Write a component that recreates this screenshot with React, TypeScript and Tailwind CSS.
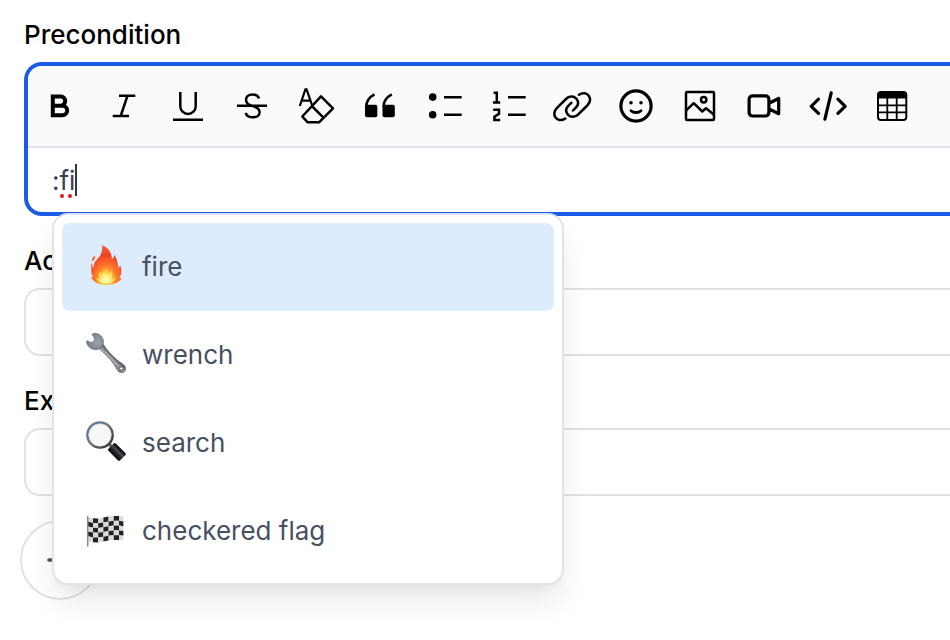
import { useState } from 'react';
import type { ReactNode } from 'react';
import { clsx } from 'clsx';

const tools: { label: string; icon: ReactNode }[] = [
  {
    label: 'Bold',
    icon: (
      <path
        strokeWidth="4"
        strokeLinejoin="miter"
        d="M12.8 10.4h8.4a4.7 4.7 0 0 1 0 9.3h-8.4zM12.8 19.7h9.6a4.7 4.7 0 0 1 0 9.5h-9.6z"
      />
    ),
  },
  { label: 'Italic', icon: <path d="M15 9.7h16.3M8.7 30H25M23.5 9.7L16.7 30" /> },
  { label: 'Underline', icon: <path d="M12.3 6v14.2a7.7 7.7 0 0 0 15.4 0V6M5 33.7h30" /> },
  {
    label: 'Strikethrough',
    icon: (
      <path d="M5 19.8h30M27 12.5C26.2 10 23.6 8.5 20.5 8.5C16.5 8.5 14 10.8 14 13.8C14 17 16 18.7 20 19.8C24.5 21 27.6 22.8 27.6 26.2C27.6 29.4 24.8 31.3 21 31.3C17.2 31.3 14.5 29.6 13.6 26.8" />
    ),
  },
  {
    label: 'Clear formatting',
    icon: (
      <>
        <path strokeWidth="2.2" d="M3.8 20L9.4 3.4h1.2L16 19M5.6 14.7h8.6" />
        <path strokeLinejoin="round" d="M25 10.3l12 12-14 14H11.7l-5.4-5.8zM15.3 19.5l12.4 12.4" />
      </>
    ),
  },
  {
    label: 'Quote',
    icon: (
      <>
        <path d="M14.5 8.4C9.5 11 6.2 15 6.2 21M31.8 8.4C26.8 11 23.5 15 23.5 21" />
        <rect x="5" y="18.7" width="12.3" height="12.5" rx="2" fill="currentColor" stroke="none" />
        <rect x="22.5" y="18.7" width="12.3" height="12.5" rx="2" fill="currentColor" stroke="none" />
      </>
    ),
  },
  {
    label: 'Bulleted list',
    icon: (
      <>
        <circle cx="8.7" cy="11.1" r="3.8" fill="currentColor" stroke="none" />
        <circle cx="8.7" cy="28.7" r="3.8" fill="currentColor" stroke="none" />
        <path d="M20 11.3h17.7M20 28.7h17.7" />
      </>
    ),
  },
  {
    label: 'Numbered list',
    icon: (
      <path d="M5.6 6.7h3.2v9.8M5 16.5h7.2M5.2 23.8h5.8v4l-4.6 2.9v3.2h5.8M20 11.3h17.7M20 28.7h17.7" />
    ),
  },
  {
    label: 'Link',
    icon: (
      <path
        strokeLinecap="round"
        d="M13.3 32.5C9.5 35.2 5 34.3 3.3 31.2C1.5 28 2.3 24.5 5 21.8L14 13C17 10 21.5 9.5 24.2 12.5C27 15.5 26.3 19 23.8 21.6L21 24.5M27 8.8C30.8 6.1 35.3 7 37 10.1C38.8 13.3 38 16.8 35.3 19.5L26.3 28.3C23.3 31.3 18.8 31.8 16.1 28.8C13.3 25.8 14 22.3 16.5 19.7L19.3 16.8"
      />
    ),
  },
  {
    label: 'Emoji',
    icon: (
      <>
        <circle cx="20" cy="20" r="15.1" strokeWidth="3.2" />
        <circle cx="15" cy="16.7" r="1.8" fill="currentColor" stroke="none" />
        <circle cx="25" cy="16.7" r="1.8" fill="currentColor" stroke="none" />
        <path strokeWidth="2.8" strokeLinecap="round" d="M15 24.7c2.6 2.4 7.4 2.4 10 0" />
      </>
    ),
  },
  {
    label: 'Image',
    icon: (
      <>
        <rect x="6" y="5.9" width="28" height="28" rx="1" />
        <circle cx="23.7" cy="13.7" r="2.7" />
        <path strokeLinejoin="round" d="M6 24.7l7.7-7.5 8.6 8.3 3.7-3.2 8 6.4" />
      </>
    ),
  },
  {
    label: 'Video',
    icon: (
      <path
        strokeWidth="3.2"
        strokeLinejoin="round"
        d="M8.5 9.8h13a3.4 3.4 0 0 1 3.4 3.4v13.4a3.4 3.4 0 0 1-3.4 3.4h-13a3.4 3.4 0 0 1-3.4-3.4V13.2a3.4 3.4 0 0 1 3.4-3.4zM25 17.3l9.7-4.8v15.2L25 22.9"
      />
    ),
  },
  {
    label: 'Code',
    icon: (
      <path
        strokeWidth="3.2"
        strokeLinecap="round"
        strokeLinejoin="round"
        d="M10.5 13.2l-7.3 7.1 7.3 7.1M29.9 13.2l7.3 7.1-7.3 7.1M23.2 6.9l-6.3 26.2"
      />
    ),
  },
  {
    label: 'Table',
    icon: (
      <>
        <rect x="6" y="6" width="28.3" height="28" rx="3" strokeWidth="2" />
        <path fill="currentColor" stroke="none" d="M6 8a2 2 0 0 1 2-2h24a2 2 0 0 1 2 2v4.4H6z" />
        <path strokeWidth="1.8" d="M15.3 12v22M24.7 12v22M6 19.3h28M6 26.4h28" />
      </>
    ),
  },
];

const FireIcon = () => (
  <>
    <defs>
      <radialGradient id="flame" cx="0.5" cy="0.88" r="0.85">
        <stop offset="0" stopColor="#ffe95a" />
        <stop offset="0.25" stopColor="#ffab2b" />
        <stop offset="0.48" stopColor="#fb6f29" />
        <stop offset="0.75" stopColor="#f04426" />
        <stop offset="1" stopColor="#f0623a" />
      </radialGradient>
      <radialGradient id="core" cx="0.5" cy="0.75" r="0.7">
        <stop offset="0" stopColor="#fffbd0" />
        <stop offset="0.5" stopColor="#ffe65a" />
        <stop offset="1" stopColor="#ffab2e" />
      </radialGradient>
    </defs>
    <g transform="translate(1 0)">
      <path
        fill="url(#flame)"
        d="M15.2.3c6.2 2.2 9.5 7.2 9.7 13.9 1.5-1 2.4-2.5 2.5-4.2 2.2 2.8 2.5 5.7 3.4 8.6.6 1.8.6 3.3.4 4.9.8-.8 1.6-2 2-3.2 2 4.8 1.5 9.5-1 12.8 1 .2 1.8-.2 2.5-.7-1.3 4.3-7.5 7.5-15 7.5-8 0-14.2-3-15.7-8.4.7.6 1.4.9 2.3.8C4 28.6 3.4 24.7 5 19.9c.3 1.2.8 2 1.7 2.6-.3-3 .6-5 2.8-7.5 1.8-2 3.2-3.2 4.2-5.4 1.3-2.8 1.5-5.6 1.5-9.3z"
      />
      <path
        fill="#f15a2a"
        d="M8.3 10.7c-2.7 1.2-3.8 3-3 5.8C7 14.7 8.2 13.3 8.3 10.7zM5 18c-1.2 1.2-1.4 2.5-.7 4 .8-1.1 1.1-2.5.7-4z"
      />
      <path
        fill="url(#core)"
        d="M20.2 22.6c1 2.4 1.2 4.2.6 6 1.5-.4 2.7-1.5 3.3-3 2.2 3.4 2 6.5.3 8.7 1.7-.3 2.7-1 3.9-2-.5 3.8-3.9 6.6-9.2 6.6-5.2 0-9.2-2.6-9.7-6.4 1 .9 2.2 1.4 3.4 1.3-1.7-2.4-1.4-5.4.2-7.6.5 1.2 1.2 1.8 2.2 2.2.1-2.9 2.9-3 5-5.8z"
      />
    </g>
  </>
);

const WrenchIcon = () => (
  <>
    <defs>
      <linearGradient id="steel" gradientUnits="userSpaceOnUse" x1="17" y1="27" x2="24" y2="20">
        <stop offset="0" stopColor="#5f5e66" />
        <stop offset="0.45" stopColor="#8d8e95" />
        <stop offset="0.7" stopColor="#9b9ca2" />
        <stop offset="1" stopColor="#66656d" />
      </linearGradient>
      <radialGradient id="jaw" gradientUnits="userSpaceOnUse" cx="11" cy="9" r="9">
        <stop offset="0" stopColor="#9ba3aa" />
        <stop offset="1" stopColor="#7d858d" />
      </radialGradient>
    </defs>
    <path
      fill="url(#steel)"
      stroke="#5b5b64"
      strokeWidth="0.8"
      d="M17.4 11.6c3.4 5.6 8.8 11.2 13.6 15.4 3 2.3 5.8 3.6 7.4 5.6 1.7 2.3 1.3 5.3-.6 6.4-2.3 1.3-5.1.6-6.6-2.2C28.2 30 21.5 23 13.2 15.6z"
    />
    <path
      fill="url(#jaw)"
      stroke="#5d666f"
      strokeWidth="0.8"
      strokeLinejoin="round"
      d="M8 .5c5-.4 9.3 3.2 9.4 8.2 0 1.5-.3 2.9-.9 4l-2.6 2.8c-3.3 1.6-7.6 1.3-10.4-1.3-2-1.8-3-3.7-2.8-5.6.2-.8 1.1-1 1.7-.4 1.5 1.5 3.4 1.7 4.9.6 1.6-1.4 1.7-3.4.4-5.2L6.2 2C6 1.2 6.8.6 8 .5z"
    />
    <path stroke="#c4c7cb" strokeWidth="1" strokeLinecap="round" d="M15.5 16.2C21 21 27 27 31 32" />
    <circle cx="35.3" cy="35.5" r="1.8" fill="#f2f3f4" stroke="#55555c" strokeWidth="1" />
  </>
);

const SearchIcon = () => (
  <>
    <defs>
      <linearGradient id="rim" x1="0" y1="0" x2="1" y2="1">
        <stop offset="0" stopColor="#507ca5" />
        <stop offset="0.45" stopColor="#72777b" />
        <stop offset="1" stopColor="#282b2e" />
      </linearGradient>
      <linearGradient id="grip" gradientUnits="userSpaceOnUse" x1="27" y1="34" x2="34" y2="27">
        <stop offset="0.1" stopColor="#101214" />
        <stop offset="0.4" stopColor="#23272a" />
        <stop offset="0.6" stopColor="#4b5156" />
        <stop offset="0.85" stopColor="#15171a" />
      </linearGradient>
    </defs>
    <path stroke="#6a7074" strokeWidth="3.4" d="M22.5 22.4l4.8 4.8" />
    <path
      fill="url(#grip)"
      d="M22.7 27.4l4.9-5c.7-.7 1.5-.7 2.2 0l9.4 9.3c.8.8.8 1.8.1 2.5L34.2 39.3c-.8.7-1.7.7-2.5-.1l-9-9.3c-.8-.8-.8-1.7 0-2.5z"
    />
    <circle cx="14" cy="14" r="12.6" fill="#f7f7f7" stroke="url(#rim)" strokeWidth="2.5" />
    <circle cx="14" cy="14" r="11.2" fill="none" stroke="#d2d4d5" strokeWidth="0.7" />
  </>
);

// x and top edge of each vertical seam of the waving cloth
const seams = [
  [2, 8],
  [7, 9.2],
  [12.2, 9.4],
  [17.4, 8.6],
  [22.6, 7.6],
  [27.8, 7],
  [33, 7],
  [37.4, 7.6],
];
const ROW = 4.8;

const FlagIcon = () => (
  <>
    {seams.slice(0, -1).map(([x1, y1], c) => {
      const [x2, y2] = seams[c + 1];
      return [0, 1, 2, 3, 4].map((r) => (
        <polygon
          key={`${c}-${r}`}
          fill={(r + c) % 2 === 1 ? '#232323' : '#dadada'}
          points={`${x1},${y1 + r * ROW} ${x2},${y2 + r * ROW} ${x2},${y2 + (r + 1) * ROW} ${x1},${y1 + (r + 1) * ROW}`}
        />
      ));
    })}
    <path stroke="#898b8d" strokeWidth="1.5" d="M1.7 7v30.5" />
  </>
);

const suggestions = [
  { name: 'fire', Icon: FireIcon },
  { name: 'wrench', Icon: WrenchIcon },
  { name: 'search', Icon: SearchIcon },
  { name: 'checkered flag', Icon: FlagIcon },
];

function Toolbar() {
  return (
    <div
      role="toolbar"
      aria-label="Formatting"
      className="flex items-center gap-4 rounded-tl-[14px] border-b-2 border-[#e1e2e7] bg-[#f9fafc] px-2 py-4"
    >
      {tools.map(({ label, icon }) => (
        <button key={label} type="button" aria-label={label} className="flex size-12 shrink-0 items-center justify-center">
          <svg viewBox="0 0 40 40" className="size-10" fill="none" stroke="currentColor" strokeWidth="2.5">
            {icon}
          </svg>
        </button>
      ))}
    </div>
  );
}

function EmojiMenu({ onPick }: { onPick: (name: string) => void }) {
  const [active, setActive] = useState(0);

  return (
    <div
      role="listbox"
      aria-label="Emoji suggestions"
      className="absolute top-[65px] left-6 z-10 flex w-[512px] flex-col rounded-2xl border-2 border-[#e2e3e8] border-t-[#d8e3fa] bg-white p-2 shadow-[0_20px_32px_-4px_rgba(0,0,0,0.09),0_6px_12px_-4px_rgba(0,0,0,0.06)]"
    >
      {suggestions.map(({ name, Icon }, i) => (
        <button
          key={name}
          type="button"
          role="option"
          aria-selected={i === active}
          onMouseEnter={() => setActive(i)}
          onClick={() => onPick(name)}
          className={clsx(
            'flex h-[88px] items-center gap-4 rounded-lg px-6 pb-0.5 text-left text-[26px] text-[#475060]',
            i === active && 'bg-[#ddecfd]',
          )}
        >
          <svg viewBox="0 0 40 40" className="mb-0.5 size-10 shrink-0" fill="none" aria-hidden="true">
            <Icon />
          </svg>
          {name}
        </button>
      ))}
    </div>
  );
}

function Field({ id, label }: { id: string; label: string }) {
  return (
    <div className="flex flex-col gap-1.5">
      <label htmlFor={id} className="text-[26px] leading-[42px] font-medium">
        {label}
      </label>
      <input
        id={id}
        type="text"
        className="h-[68px] w-full rounded-l-2xl border-2 border-r-0 border-[#e1e2e7] bg-white px-6 text-[26px] outline-none"
      />
    </div>
  );
}

export default function App() {
  const [text, setText] = useState(':fi');
  const isQuery = text === ':fi';

  return (
    <main className="flex min-h-screen flex-col gap-6 overflow-hidden bg-white pt-[14px] pb-10 pl-6 font-['Inter',sans-serif] text-black">
      <div className="flex flex-col gap-1.5">
        <label htmlFor="precondition" className="text-[26px] leading-[42px] font-medium">
          Precondition
        </label>
        <div className="rounded-l-[18px] border-4 border-r-0 border-[#1c5ae8]">
          <Toolbar />
          <div className="relative">
            <textarea
              id="precondition"
              rows={1}
              spellCheck={false}
              value={text}
              onChange={(e) => setText(e.target.value)}
              className="block h-16 w-full resize-none bg-transparent px-6 pt-[13px] pb-[11px] text-[26px] leading-10 text-[#374151] outline-none"
            />
            {isQuery && (
              <>
                {/* caret and spelling marks */}
                <span className="absolute top-4 left-[47px] h-8 w-[2px] bg-[#2f3747]" />
                <span className="absolute top-[46px] left-8 flex gap-1">
                  <span className="size-1 rounded-full bg-[#e5161d]" />
                  <span className="size-1 rounded-full bg-[#e5161d]" />
                </span>
              </>
            )}
            {text.startsWith(':') && <EmojiMenu onPick={(name) => setText(`:${name}:`)} />}
          </div>
        </div>
      </div>

      <Field id="action" label="Action" />
      <Field id="expected" label="Expected result" />

      <button
        type="button"
        aria-label="Add step"
        className="-ml-1 flex size-20 items-center justify-center rounded-full border-2 border-[#e1e2e7] text-[#4b5563]"
      >
        <svg viewBox="0 0 28 28" className="size-7" fill="none" stroke="currentColor" strokeWidth="3.6" strokeLinecap="round">
          <path d="M3 14h22M14 3v22" />
        </svg>
      </button>
    </main>
  );
}
